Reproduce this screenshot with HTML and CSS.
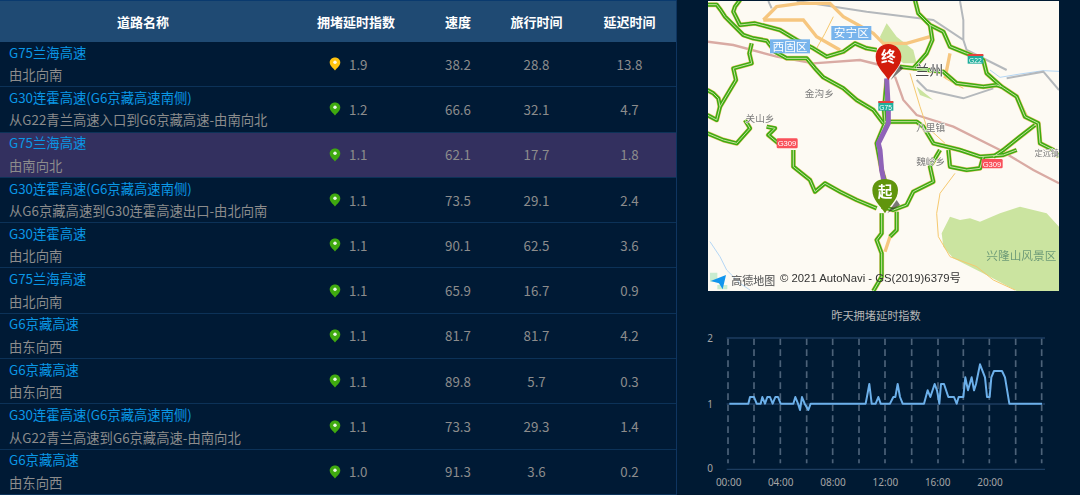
FILE: index.html
```html
<!DOCTYPE html>
<html lang="zh">
<head>
<meta charset="utf-8">
<title>道路拥堵</title>
<link rel="stylesheet" href="styles.css">
</head>
<body>
<svg class="defs" width="0" height="0" aria-hidden="true">
  <defs>
    <symbol id="pin" viewBox="0 0 12 14">
      <path d="M6 .5C2.9.5.7 2.7.7 5.4.7 8.4 4 10.800 6 13.500 8 10.800 11.300 8.400 11.300 5.400 11.300 2.700 9.100.5 6 .5Z" fill="currentColor"/>
      <circle cx="6" cy="5.300" r="1.700" fill="#fff" opacity=".9"/>
    </symbol>
  </defs>
</svg>
<main class="page">
  <section class="table">
    <div class="row head">
      <div class="c name">道路名称</div><div class="c idx">拥堵延时指数</div><div class="c spd">速度</div><div class="c trv">旅行时间</div><div class="c dly">延迟时间</div>
    </div>
    <div class="row">
      <div class="c name"><a>G75兰海高速</a><span>由北向南</span></div>
      <div class="c idx"><svg class="pin warn"><use href="#pin"/></svg>1.9</div><div class="c spd">38.2</div><div class="c trv">28.8</div><div class="c dly">13.8</div>
    </div>
    <div class="row">
      <div class="c name"><a>G30连霍高速(G6京藏高速南侧)</a><span>从G22青兰高速入口到G6京藏高速-由南向北</span></div>
      <div class="c idx"><svg class="pin"><use href="#pin"/></svg>1.2</div><div class="c spd">66.6</div><div class="c trv">32.1</div><div class="c dly">4.7</div>
    </div>
    <div class="row active">
      <div class="c name"><a>G75兰海高速</a><span>由南向北</span></div>
      <div class="c idx"><svg class="pin"><use href="#pin"/></svg>1.1</div><div class="c spd">62.1</div><div class="c trv">17.7</div><div class="c dly">1.8</div>
    </div>
    <div class="row">
      <div class="c name"><a>G30连霍高速(G6京藏高速南侧)</a><span>从G6京藏高速到G30连霍高速出口-由北向南</span></div>
      <div class="c idx"><svg class="pin"><use href="#pin"/></svg>1.1</div><div class="c spd">73.5</div><div class="c trv">29.1</div><div class="c dly">2.4</div>
    </div>
    <div class="row">
      <div class="c name"><a>G30连霍高速</a><span>由北向南</span></div>
      <div class="c idx"><svg class="pin"><use href="#pin"/></svg>1.1</div><div class="c spd">90.1</div><div class="c trv">62.5</div><div class="c dly">3.6</div>
    </div>
    <div class="row">
      <div class="c name"><a>G75兰海高速</a><span>由北向南</span></div>
      <div class="c idx"><svg class="pin"><use href="#pin"/></svg>1.1</div><div class="c spd">65.9</div><div class="c trv">16.7</div><div class="c dly">0.9</div>
    </div>
    <div class="row">
      <div class="c name"><a>G6京藏高速</a><span>由东向西</span></div>
      <div class="c idx"><svg class="pin"><use href="#pin"/></svg>1.1</div><div class="c spd">81.7</div><div class="c trv">81.7</div><div class="c dly">4.2</div>
    </div>
    <div class="row">
      <div class="c name"><a>G6京藏高速</a><span>由东向西</span></div>
      <div class="c idx"><svg class="pin"><use href="#pin"/></svg>1.1</div><div class="c spd">89.8</div><div class="c trv">5.7</div><div class="c dly">0.3</div>
    </div>
    <div class="row">
      <div class="c name"><a>G30连霍高速(G6京藏高速南侧)</a><span>从G22青兰高速到G6京藏高速-由南向北</span></div>
      <div class="c idx"><svg class="pin"><use href="#pin"/></svg>1.1</div><div class="c spd">73.3</div><div class="c trv">29.3</div><div class="c dly">1.4</div>
    </div>
    <div class="row">
      <div class="c name"><a>G6京藏高速</a><span>由东向西</span></div>
      <div class="c idx"><svg class="pin"><use href="#pin"/></svg>1.0</div><div class="c spd">91.3</div><div class="c trv">3.6</div><div class="c dly">0.2</div>
    </div>
  </section>

  <aside class="side">
    <svg class="map" viewBox="24 3 1053 870" role="img" aria-label="兰州路线地图">
      <defs>
        <g id="traffic">
          <path d="M22 14L50 14 62 30 75 50 100 75 130 105 160 115 200 122 225 155 260 175 320 175 345 205 370 232 430 265 470 300 520 330 550 370"/>
          <path d="M120 0L105 20 100 35 120 75 165 70 240 90 290 120 340 145 380 170 430 155 465 130 500 145 530 150"/>
          <path d="M155 130L148 160 155 190 100 205 108 240 90 270 60 320 55 295 40 280 22 270"/>
          <path d="M60 320L50 360 22 345"/>
          <path d="M22 400L70 420 110 430 150 385 135 360M200 380L225 385 205 405 235 430"/>
          <path d="M280 450L280 500 330 540 345 575 375 550 420 575 470 600 530 625"/>
          <path d="M645 0L655 40 690 75 730 95 750 140 800 160 850 180 860 220 905 260 950 290 975 350 1015 370 1020 430 1060 450 1077 470"/>
          <path d="M690 75L697 120 680 160 640 205 600 200"/>
          <path d="M640 205L730 215 770 250 850 260 890 255 905 260"/>
          <path d="M1005 375L960 410 910 450 880 470"/>
          <path d="M555 365L650 365 670 380 700 430 780 450 840 470 910 465 950 450"/>
          <path d="M720 450L690 500 700 545 640 575 620 615 580 630 545 620"/>
          <path d="M745 450L750 500 800 510 840 505 850 470"/>
          <path d="M545 640L545 700 530 720 545 760 545 830 520 873"/>
          <path d="M590 635L590 690 570 710"/>
          <path d="M560 240L552 330 555 370 530 430 545 510 560 560"/>
        </g>
      </defs>
      <rect class="land" x="24" y="3" width="1053" height="870"/>
      <path class="park" d="M725 700L750 650 780 660 810 655 840 665 900 640 960 620 1040 640 1077 680V873H950L870 830 760 775 730 740Z"/>
      <path class="park" d="M540 110L560 70 590 110 640 150 650 190 610 190 550 140ZM650 260L700 300 660 285Z"/>
      <path class="water" d="M30 725L60 770 80 810 120 850 150 870M870 210L900 232 960 222 1030 212 1077 214"/>
      <g class="rail">
        <path d="M22 125L100 135 230 170 340 190 480 180 540 195"/>
        <path d="M585 230L610 300 650 345 760 380 900 450 1000 510 1077 550"/>
      </g>
      <g class="grey">
        <path d="M205 3L215 25M290 3L500 35 700 60 790 120 800 150 920 210M780 3L790 60 790 120"/>
        <path d="M650 240L680 270 790 295 880 265M920 235L1030 215 1077 270"/>
      </g>
      <g class="tan">
        <path d="M190 60L230 20 300 10 390 10 430 50 520 100 550 130 620 130 690 110"/>
        <path d="M190 60L310 60 350 110 420 150M750 160L735 235M590 690L570 710 555 755M950 290L980 350"/>
      </g>
      <g class="thin">
        <path d="M400 50L375 100 350 145M630 220L660 320 680 380 735 430M735 235L790 265"/>
        <path d="M765 520L720 580 710 640 715 710 750 770 830 800 880 840 945 870"/>
      </g>
      <use href="#traffic" class="tr-under"/>
      <use href="#traffic" class="tr-base"/>
      <use href="#traffic" class="tr-core"/>
      <path class="route" d="M560 235L565 330 565 370 535 430 540 450 545 510 555 560"/>
      <g class="chip blue"><rect x="394" y="78" width="120" height="42"/><text x="454" y="112">安宁区</text></g>
      <g class="chip blue"><rect x="210" y="118" width="120" height="42"/><text x="270" y="152">西固区</text></g>
      <g class="chip red"><rect x="230" y="415" width="63" height="30" rx="4"/><text x="261" y="439">G309</text></g>
      <g class="chip red"><rect x="845" y="477" width="63" height="28" rx="4"/><text x="876" y="500">G309</text></g>
      <g class="chip teal"><rect x="535" y="305" width="45" height="27"/><rect class="stripe" x="535" y="303" width="45" height="6"/><text x="557" y="329">G75</text></g>
      <g class="chip teal"><rect x="803" y="165" width="47" height="26"/><rect class="stripe" x="803" y="162" width="47" height="6"/><text x="826" y="188">G22</text></g>
      <text class="city" x="688" y="226">兰州</text>
      <text class="place" x="358" y="290">金沟乡</text>
      <text class="place" x="180" y="365">关山乡</text>
      <text class="place" x="692" y="393">八里镇</text>
      <text class="place" x="692" y="495">魏岭乡</text>
      <text class="place edge" x="1040" y="467">定远镇</text>
      <text class="scenic" x="964" y="780">兴隆山风景区</text>
      <path class="nav-bg" d="M30 818H52V845H30ZM52 855H82V868H52Z"/>
      <path class="nav" d="M32 843L78 825 68 868 57 850Z"/>
      <text class="brand" x="94" y="855">高德地图</text>
      <text class="copy" x="240" y="847">© 2021 AutoNavi - GS(2019)6379号</text>
      <path class="shadow" d="M572 240L600 195 610 205Z"/>
      <path class="end" d="M565 240C550 215 527 200 527 170 527 148 544 132 565 132 586 132 604 148 604 170 604 200 580 215 565 240Z"/>
      <text class="pin-label" x="565" y="186">终</text>
      <path class="shadow" d="M562 640L590 600 600 615Z"/>
      <path class="start" d="M555 640C540 615 517 600 517 570 517 548 534 537 555 537 576 537 594 548 594 570 594 600 570 615 555 640Z"/>
      <text class="pin-label" x="555" y="592">起</text>
    </svg>
    <h2 class="chart-title">昨天拥堵延时指数</h2>
    <svg class="chart" viewBox="0 75 1140 510" role="img" aria-label="昨天拥堵延时指数折线图">
      <g class="vgrid">
        <path d="M84 115V490M162 115V490M241 115V490M320 115V490M398 115V490M477 115V490M555 115V490M635 115V490M714 115V490M790 115V490M868 115V490M947 115V490M1025 115V490"/>
      </g>
      <path class="hgrid" d="M80 114H1035M80 312H1035M80 508H1035"/>
      <polyline class="line" points="88,311 145,311 150,291 162,291 170,311 182,311 187,291 195,311 202,291 210,291 218,311 226,291 234,291 242,311 280,311 286,291 294,311 300,330 306,291 314,311 325,330 332,311 497,311 508,252 515,311 527,311 535,291 542,311 570,311 580,291 586,291 593,252 600,291 608,311 672,311 683,271 691,291 704,252 711,271 718,311 723,252 732,252 745,291 762,291 770,311 776,291 790,291 796,232 804,271 815,232 822,271 828,252 840,193 855,232 861,291 869,291 874,232 882,213 906,213 915,232 928,311 1026,311"/>
      <g class="ylab">
        <text x="30" y="126">2</text>
        <text x="30" y="323">1</text>
        <text x="30" y="517">0</text>
      </g>
      <g class="xlab">
        <text x="86" y="559">00:00</text>
        <text x="242" y="559">04:00</text>
        <text x="399" y="559">08:00</text>
        <text x="556" y="559">12:00</text>
        <text x="713" y="559">16:00</text>
        <text x="870" y="559">20:00</text>
      </g>
    </svg>
  </aside>
</main>
</body>
</html>
```
FILE: styles.css
```css
* { box-sizing: border-box; }
html, body { margin: 0; height: 495px; overflow: hidden; background: #001a33; }
body { font-family: "Noto Sans CJK SC", "Noto Sans", sans-serif; font-size: 13.330px; }
.defs { position: absolute; }
.page { display: flex; height: 495px; }

.table { width: 677px; flex: none; border-right: 1px solid #0f3560; }
.row {
  display: flex;
  height: 45.300px;
  align-items: center;
  color: #8c8c8c;
  background: #001a35;
  border-bottom: 1px solid #0c3258;
}
.row.head {
  height: 42px;
  color: #fff;
  font-size: 13px;
  font-weight: 700;
  background: #1f4a73;
  border-top: 1px solid #0a3a6e;
  border-bottom: 0;
}
.row.active { background: #33305f; }
.c { text-align: center; flex: none; }
.name { width: 286px; }
.idx { width: 140px; }
.spd { width: 64px; }
.trv { width: 93px; }
.dly { width: 93px; }
.row:not(.head) .name {
  display: flex;
  flex-direction: column;
  text-align: left;
  padding-left: 9px;
  line-height: 22.500px;
}
.row:not(.head) .idx {
  display: flex;
  align-items: center;
  padding-left: 43px;
  gap: 8px;
}
.name a { color: #0a97e6; }
.name span { color: #8c8c8c; }
.pin { width: 12px; height: 14px; flex: none; color: #3fa90f; }
.pin.warn { color: #ffc30f; }

.side { width: 380px; flex: none; padding-top: 1px; margin-left: 23px; }
.map { display: block; width: 351px; height: 290px; margin-left: 8px; filter: blur(.3px); }
.chart-title {
  margin: 14px 0 0;
  height: 20px;
  font-size: 11.200px;
  font-weight: 400;
  line-height: 20px;
  color: #b5b5b5;
  text-align: center;
  width: 352px;
}
.chart { display: block; width: 380px; height: 170px; }

.land { fill: #fdfaf3; }
.park { fill: #cbe4a0; }
.water { fill: none; stroke: #b4d6f5; stroke-width: 3; }
.rail path { fill: none; stroke: #d9aaa3; stroke-width: 7; }
.grey path { fill: none; stroke: #b4b8bc; stroke-width: 6; }
.tan path { fill: none; stroke: #f6c67f; stroke-width: 10; }
.thin path { fill: none; stroke: #f6c96f; stroke-width: 3; }
.tr-under { fill: none; stroke: #f6c67f; stroke-width: 15; stroke-linejoin: round; }
.tr-base { fill: none; stroke: #3cac12; stroke-width: 12; stroke-linejoin: round; }
.tr-core { fill: none; stroke: #c9df9d; stroke-width: 3; stroke-linejoin: round; }
.route { fill: none; stroke: #8f63b8; stroke-width: 15; stroke-linejoin: round; }
.chip text { fill: #fff; font-size: 35px; text-anchor: middle; font-family: "Noto Sans CJK SC", sans-serif; }
.chip.blue rect { fill: #78b4ec; }
.chip.red rect { fill: #f9505a; }
.chip.red text { font-size: 23px; font-family: "Liberation Sans", sans-serif; }
.chip.teal rect { fill: #1fae9c; }
.chip.teal .stripe { fill: #e8413c; }
.chip.teal text { font-size: 20px; font-family: "Liberation Sans", sans-serif; }
.city { fill: #4a4a4a; font-size: 42px; text-anchor: middle; stroke: #fff; stroke-width: 3; paint-order: stroke; }
.place { fill: #7b7b7b; font-size: 29px; text-anchor: middle; stroke: #fdfaf3; stroke-width: 3; paint-order: stroke; }
.place.edge { font-size: 24px; }
.scenic { fill: #6f9c78; font-size: 35px; text-anchor: middle; }
.nav { fill: #1296ee; }
.nav-bg { fill: #c9ecd0; }
.brand { fill: #6a6a6a; font-size: 33px; font-weight: 500; }
.copy { fill: #333; font-size: 34px; font-family: "Liberation Sans", "Noto Sans CJK SC", sans-serif; }
.shadow { fill: #333; opacity: .65; }
.end { fill: #d21c0c; }
.start { fill: #60950d; }
.pin-label { fill: #fff; font-size: 44px; font-weight: 700; text-anchor: middle; }

.vgrid path { fill: none; stroke: #4c6279; stroke-width: 5; stroke-dasharray: 20 13; }
.hgrid { fill: none; stroke: #1c3d60; stroke-width: 4; }
.line { fill: none; stroke: #6cb0ea; stroke-width: 6; stroke-linejoin: round; }
.ylab text, .xlab text { fill: #a5a5a5; font-size: 30px; text-anchor: middle; font-family: "Noto Sans", sans-serif; }
```
